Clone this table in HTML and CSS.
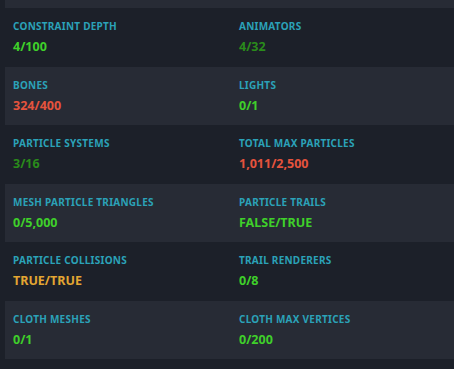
FILE: index.html
```html
<!DOCTYPE html>
<html>
<head>
<meta charset="utf-8">
<link rel="stylesheet" href="styles.css">
</head>
<body>
<div class="list">
  <div class="row alt tail"></div>
  <div class="row">
    <div class="cell"><div class="label">Constraint Depth</div><div class="value ok">4/100</div></div>
    <div class="cell"><div class="label">Animators</div><div class="value dim">4/32</div></div>
  </div>
  <div class="row alt">
    <div class="cell"><div class="label">Bones</div><div class="value bad">324/400</div></div>
    <div class="cell"><div class="label">Lights</div><div class="value ok">0/1</div></div>
  </div>
  <div class="row">
    <div class="cell"><div class="label">Particle Systems</div><div class="value dim">3/16</div></div>
    <div class="cell"><div class="label">Total Max Particles</div><div class="value bad">1,011/2,500</div></div>
  </div>
  <div class="row alt">
    <div class="cell"><div class="label">Mesh Particle Triangles</div><div class="value ok">0/5,000</div></div>
    <div class="cell"><div class="label">Particle Trails</div><div class="value ok">FALSE/TRUE</div></div>
  </div>
  <div class="row">
    <div class="cell"><div class="label">Particle Collisions</div><div class="value warn">TRUE/TRUE</div></div>
    <div class="cell"><div class="label">Trail Renderers</div><div class="value ok">0/8</div></div>
  </div>
  <div class="row alt">
    <div class="cell"><div class="label">Cloth Meshes</div><div class="value ok">0/1</div></div>
    <div class="cell"><div class="label">Cloth Max Vertices</div><div class="value ok">0/200</div></div>
  </div>
</div>
</body>
</html>
```
FILE: styles.css
```css
html, body {
  margin: 0;
  padding: 0;
  background: #1c2029;
  height: 100%;
  overflow: hidden;
}
body {
  font-family: "Noto Sans", "DejaVu Sans", sans-serif;
  font-weight: 700;
}
.list {
  display: flex;
  flex-direction: column;
}
.row {
  display: grid;
  grid-template-columns: 226px 1fr;
  height: 58.5px;
  box-sizing: border-box;
  margin-left: 5px;
  padding-left: 8px;
  padding-top: 12px;
}
.row.alt {
  background: #272b35;
}
.row.tail {
  height: 8px;
  padding: 0;
}
.cell {
  display: flex;
  flex-direction: column;
}
.label {
  text-transform: uppercase;
  color: #2ba2b8;
  font-size: 10px;
  letter-spacing: 0.25px;
  line-height: 13px;
}
.value {
  font-size: 12.5px;
  line-height: 16px;
  margin-top: 6px;
}
.ok { color: #3fd02a; }
.dim { color: #2a8b1b; }
.bad { color: #e5533d; }
.warn { color: #e3a632; }
```
